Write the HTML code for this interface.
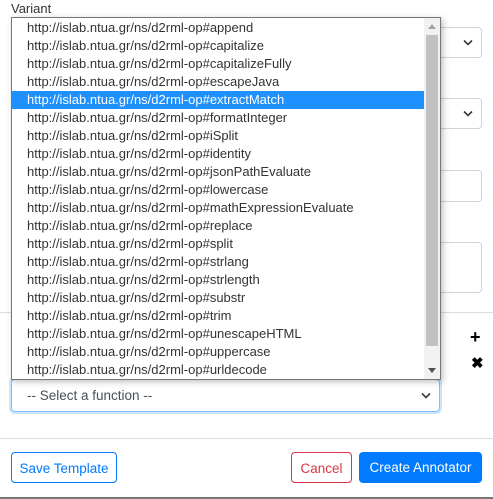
<html><head><style>
body{margin:0;width:493px;height:499px;background:#fff;font-family:"Liberation Sans",sans-serif;position:relative;overflow:hidden}
.a{position:absolute}
.f{border:1px solid #ced4da;border-radius:4px;background:#fff}
.list{left:11px;top:17px;width:428px;height:361px;border:1px solid #767676;background:#fff;box-shadow:2px 2px 6px rgba(0,0,0,.25)}
.it{height:18px;line-height:18px;padding-left:15px;font-size:13px;color:#333;white-space:nowrap;width:397px}
.sel{background:#1e90ff;color:#fff}
.btn{top:452px;height:31px;border-radius:4px;font-size:13.5px;line-height:31px;text-align:center;box-sizing:border-box}
.chev{position:absolute;right:8px;top:11px}
</style></head><body>
<div class="a" style="left:11px;top:1px;font-size:13px;color:#333">Variant</div>
<div class="a f" style="left:420px;top:27px;width:60px;height:29px"><svg class="chev" width="10" height="7" viewBox="0 0 10 7"><path d="M1 1.5L5 5.5L9 1.5" fill="none" stroke="#343a40" stroke-width="1.6"/></svg></div>
<div class="a f" style="left:420px;top:98px;width:60px;height:29px"><svg class="chev" width="10" height="7" viewBox="0 0 10 7"><path d="M1 1.5L5 5.5L9 1.5" fill="none" stroke="#343a40" stroke-width="1.6"/></svg></div>
<div class="a f" style="left:420px;top:170px;width:60px;height:30px"></div>
<div class="a f" style="left:420px;top:242px;width:60px;height:49px"></div>
<div class="a" style="left:0;top:312px;width:493px;height:1px;background:#ddd"></div>
<div class="a" style="left:470px;top:327px;font-size:18px;font-weight:bold">+</div>
<div class="a" style="left:471px;top:354px;font-size:15px;font-weight:bold">✖</div>
<div class="a" style="left:11px;top:379px;width:427px;height:31px;border:1px solid #80bdff;border-radius:4px;box-shadow:0 0 0 2px rgba(0,123,255,.2);font-size:13.5px;color:#495057;line-height:31px"><span style="padding-left:15px">-- Select a function --</span><svg class="chev" style="top:12px" width="10" height="7" viewBox="0 0 10 7"><path d="M1 1.5L5 5.5L9 1.5" fill="none" stroke="#343a40" stroke-width="1.6"/></svg></div>
<div class="a" style="left:0;top:438px;width:493px;height:1px;background:#ddd"></div>
<div class="a btn" style="left:11px;width:106px;border:1px solid #007bff;color:#007bff">Save Template</div>
<div class="a btn" style="left:291px;width:61px;border:1px solid #dc3545;color:#dc3545">Cancel</div>
<div class="a btn" style="left:359px;width:123px;background:#007bff;color:#fff">Create Annotator</div>
<div class="a" style="left:0;top:497px;width:493px;height:2px;background:#777"></div>
<div class="a list">
<div class="a" style="right:0;top:0;width:16px;height:361px;background:#f1f1f1"></div>
<div class="a" style="right:2px;top:17px;width:12px;height:311px;background:#c1c1c1"></div>
<svg class="a" style="right:4px;top:6px" width="8" height="5"><path d="M0 5L4 0L8 5Z" fill="#a3a3a3"/></svg>
<svg class="a" style="right:4px;top:350px" width="8" height="5"><path d="M0 0L4 5L8 0Z" fill="#505050"/></svg>
<div style="padding-top:1px">
<div class="it">http://islab.ntua.gr/ns/d2rml-op#append</div>
<div class="it">http://islab.ntua.gr/ns/d2rml-op#capitalize</div>
<div class="it">http://islab.ntua.gr/ns/d2rml-op#capitalizeFully</div>
<div class="it">http://islab.ntua.gr/ns/d2rml-op#escapeJava</div>
<div class="it sel">http://islab.ntua.gr/ns/d2rml-op#extractMatch</div>
<div class="it">http://islab.ntua.gr/ns/d2rml-op#formatInteger</div>
<div class="it">http://islab.ntua.gr/ns/d2rml-op#iSplit</div>
<div class="it">http://islab.ntua.gr/ns/d2rml-op#identity</div>
<div class="it">http://islab.ntua.gr/ns/d2rml-op#jsonPathEvaluate</div>
<div class="it">http://islab.ntua.gr/ns/d2rml-op#lowercase</div>
<div class="it">http://islab.ntua.gr/ns/d2rml-op#mathExpressionEvaluate</div>
<div class="it">http://islab.ntua.gr/ns/d2rml-op#replace</div>
<div class="it">http://islab.ntua.gr/ns/d2rml-op#split</div>
<div class="it">http://islab.ntua.gr/ns/d2rml-op#strlang</div>
<div class="it">http://islab.ntua.gr/ns/d2rml-op#strlength</div>
<div class="it">http://islab.ntua.gr/ns/d2rml-op#substr</div>
<div class="it">http://islab.ntua.gr/ns/d2rml-op#trim</div>
<div class="it">http://islab.ntua.gr/ns/d2rml-op#unescapeHTML</div>
<div class="it">http://islab.ntua.gr/ns/d2rml-op#uppercase</div>
<div class="it">http://islab.ntua.gr/ns/d2rml-op#urldecode</div>
</div></div>
</body></html>
